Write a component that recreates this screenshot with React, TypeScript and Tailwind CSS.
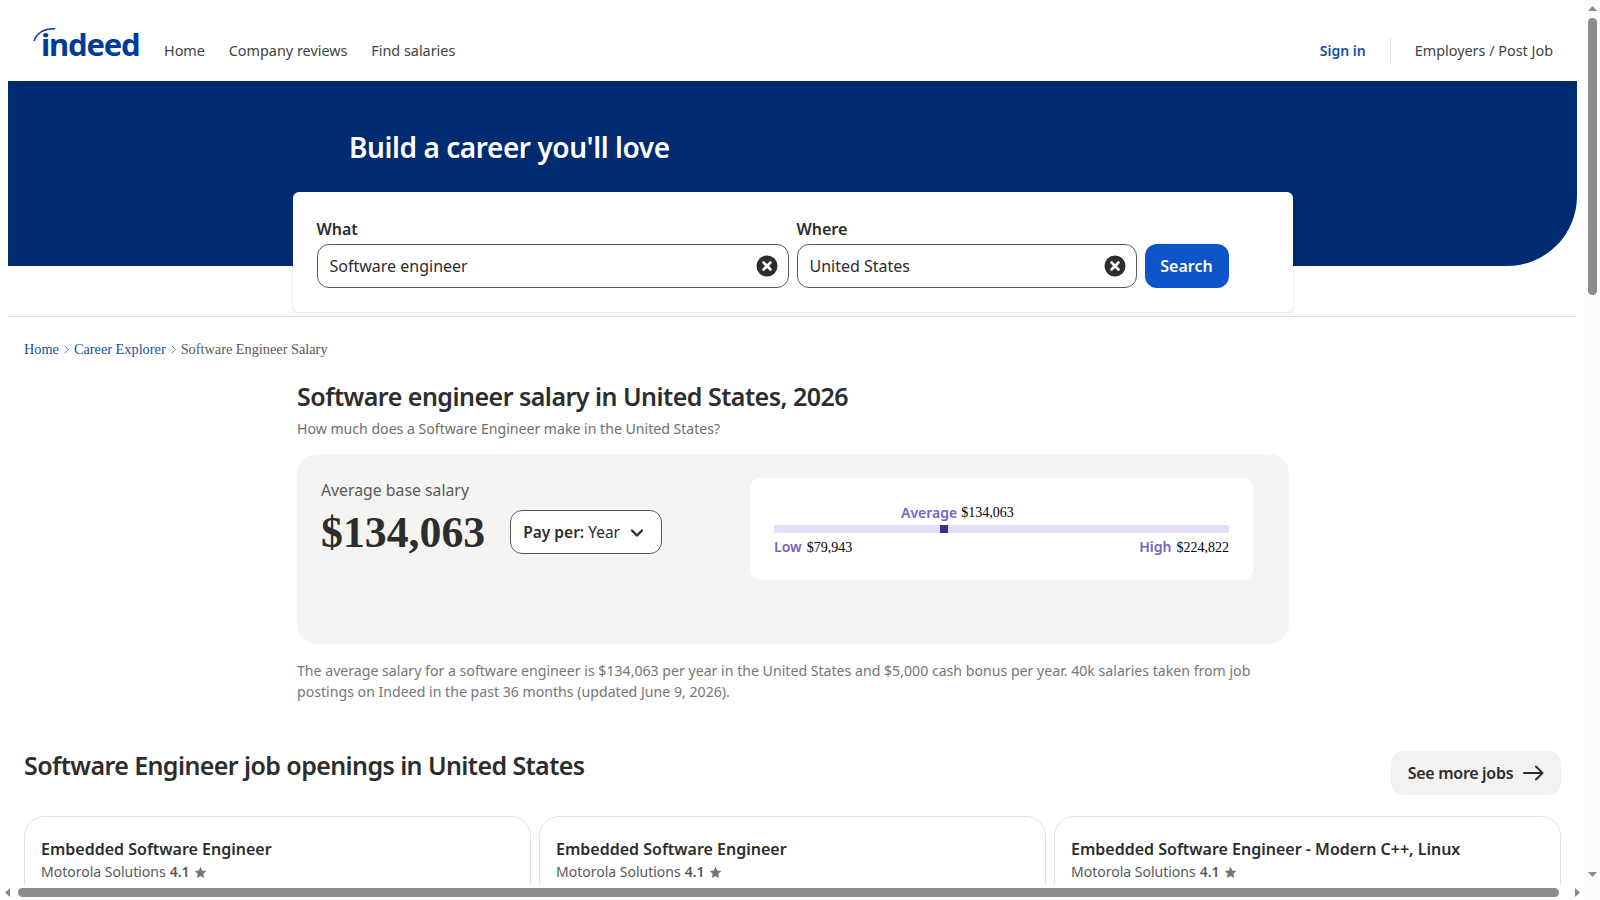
function ClearIcon() {
  return (
    <svg width="22" height="22" viewBox="0 0 22 22" className="shrink-0">
      <circle cx="11" cy="11" r="10.500" fill="#2d2d2d" />
      <path d="M7.500 7.500l7 7M14.500 7.500l-7 7" stroke="#fff" strokeWidth="2.600" strokeLinecap="round" />
    </svg>
  );
}

function Star() {
  return (
    <svg width="13" height="13" viewBox="0 0 24 24" fill="#767676" className="shrink-0">
      <path d="M12 1.500l3.200 6.900 7.500.9-5.500 5.200 1.400 7.500L12 18.300l-6.600 3.700 1.400-7.500L1.300 9.300l7.500-.9z" />
    </svg>
  );
}

function Logo() {
  return (
    <div className="relative h-[40px] w-[105px] shrink-0">
      <svg width="30" height="22" viewBox="0 0 30 22" className="absolute left-0 top-0">
        <path d="M1 14C4 6 11 1.500 22 1.800" fill="none" stroke="#003a9b" strokeWidth="1.400" />
      </svg>
      <span className="absolute left-[8px] top-[-4px] text-[31px] font-bold leading-[42px] tracking-[-1.200px] text-[#003a9b]">indeed</span>
    </div>
  );
}

function ChevronSep() {
  return (
    <svg width="5" height="9" viewBox="0 0 5 9" className="shrink-0">
      <path d="M.8.800l3.400 3.700L.8 8.200" fill="none" stroke="#767676" strokeWidth="1" />
    </svg>
  );
}

function JobCard({ title }: { title: string }) {
  return (
    <div className="h-[120px] rounded-[20px] border border-[#e4e2e0] px-4 pt-[21px]">
      <div className="text-[16px] font-semibold leading-[22px] text-[#2d2d2d]">{title}</div>
      <div className="mt-[1px] flex items-center gap-[4px] text-[14px] leading-[22px] text-[#595959]">
        <span>Motorola Solutions</span>
        <span className="font-semibold">4.1</span>
        <Star />
      </div>
    </div>
  );
}

function SearchField({ label, value, width }: { label: string; value: string; width: string }) {
  return (
    <div className={width}>
      <div className="mb-[1px] text-[16px] font-semibold leading-[27px] text-[#2d2d2d]">{label}</div>
      <div className="flex h-[44px] items-center justify-between rounded-xl border border-[#595959] pl-3 pr-[10px]">
        <span className="text-[16px] text-[#2d2d2d]">{value}</span>
        <ClearIcon />
      </div>
    </div>
  );
}

function Scrollbars() {
  return (
    <>
      <div className="absolute right-0 top-0 h-full w-[15px] bg-[#fbfbfb]">
        <svg width="15" height="15" viewBox="0 0 15 15" className="absolute left-0 top-0">
          <path d="M3 11l4.500-5 4.500 5z" fill="#8a8a8a" />
        </svg>
        <div className="absolute left-[3px] top-[18px] h-[277px] w-[9px] rounded-full bg-[#8c8c8c]" />
        <svg width="15" height="15" viewBox="0 0 15 15" className="absolute bottom-[18px] left-0">
          <path d="M3 5l4.500 5 4.500-5z" fill="#8a8a8a" />
        </svg>
      </div>
      <div className="absolute bottom-0 left-0 h-[15px] w-[1585px] bg-[#ffffff]">
        <svg width="15" height="15" viewBox="0 0 15 15" className="absolute left-0 top-0">
          <path d="M10 3L5 7.500l5 4.500z" fill="#8a8a8a" />
        </svg>
        <div className="absolute left-[18px] top-[3px] h-[9px] w-[1541px] rounded-full bg-[#8c8c8c]" />
        <svg width="15" height="15" viewBox="0 0 15 15" className="absolute right-0 top-0">
          <path d="M5 3l5 4.500-5 4.500z" fill="#8a8a8a" />
        </svg>
      </div>
    </>
  );
}

export default function App() {
  return (
    <div className="relative h-[900px] w-[1600px] overflow-hidden bg-white font-['Noto_Sans',sans-serif]">
      <div className="w-[1585px] px-2">
        {/* Header */}
        <header className="flex h-[81px] items-start justify-between pl-[25px] pr-[24px] text-[14.400px] text-[#424242]">
          <div className="flex items-start pt-[27px]">
            <Logo />
            <nav className="ml-[26px] flex gap-[23.800px] pt-[13px] leading-[22px]">
              <span>Home</span>
              <span>Company reviews</span>
              <span>Find salaries</span>
            </nav>
          </div>
          <div className="flex items-center pt-[38px]">
            <span className="text-[14px] font-semibold leading-[24px] text-[#164fa7]">Sign in</span>
            <div className="mx-6 h-[25px] w-px bg-[#e4e2e0]" />
            <span className="leading-[24px]">Employers / Post Job</span>
          </div>
        </header>

        {/* Hero */}
        <section className="h-[185px] rounded-br-[70px] bg-[#002b70]">
          <h2 className="pl-[341px] pt-[45px] text-[28px] font-semibold leading-[42px] tracking-[-0.430px] text-white">Build a career you'll love</h2>
        </section>

        {/* Search */}
        <div className="relative mx-auto -mt-[74px] flex h-[120px] w-[1000px] items-start gap-2 rounded-md bg-white px-6 pt-[24px] shadow-[0_1px_3px_rgba(0,0,0,0.14)]">
          <SearchField label="What" value="Software engineer" width="w-[472px]" />
          <SearchField label="Where" value="United States" width="w-[340px]" />
          <button className="mt-[28px] h-[44px] w-[84px] rounded-xl bg-[#0d55c8] text-[16px] font-semibold text-white">Search</button>
        </div>
        <div className="mt-[4px] h-px bg-[#e4e2e0]" />

        {/* Breadcrumb */}
        <nav className="mt-[22px] flex items-center gap-[5px] pl-4 font-['Liberation_Serif',serif] text-[14.300px] leading-[20px] text-[#595959]">
          <span className="text-[#164fa7]">Home</span>
          <ChevronSep />
          <span className="text-[#164fa7]">Career Explorer</span>
          <ChevronSep />
          <span>Software Engineer Salary</span>
        </nav>

        {/* Salary */}
        <main className="ml-[289px] w-[992px]">
          <h1 className="mt-[19px] text-[25px] font-semibold leading-[36px] tracking-[-0.520px] text-[#2d2d2d]">Software engineer salary in United States, 2026</h1>
          <p className="mt-[4px] text-[14.100px] leading-[22px] text-[#6f6f6f]">How much does a Software Engineer make in the United States?</p>
          <div className="mt-[14px] flex h-[190px] items-start rounded-[20px] bg-[#f5f4f2] pl-6 pt-[25px]">
            <div className="w-[429px] shrink-0">
              <div className="text-[15.800px] leading-[22px] text-[#595959]">Average base salary</div>
              <div className="mt-[9px] flex items-start">
                <span className="font-['Liberation_Serif',serif] text-[43.800px] font-bold leading-[44px] text-[#2d2d2d]">$134,063</span>
                <div className="ml-[25px] flex h-[44px] w-[152px] items-center rounded-xl border border-[#595959] bg-white pl-3 pt-[1px] text-[15.500px] text-[#2d2d2d]">
                  <span className="font-semibold">Pay per:</span>
                  <span className="ml-1">Year</span>
                  <svg width="14" height="10" viewBox="0 0 14 10" className="ml-[10px]">
                    <path d="M2 2.500l5 5 5-5" fill="none" stroke="#2d2d2d" strokeWidth="2.400" strokeLinecap="round" strokeLinejoin="round" />
                  </svg>
                </div>
              </div>
            </div>
            <div className="-mt-px flex h-[102px] w-[503px] flex-col rounded-[10px] bg-white px-6 pt-[25px]">
              <div className="flex items-center justify-start pl-[127px] text-[14px] leading-[20px]">
                <span className="font-semibold text-[#7563c6]">Average</span>
                <span className="ml-1 font-['Liberation_Serif',serif] text-black">$134,063</span>
              </div>
              <div className="relative mt-[2px] h-2 rounded-[1px] bg-[#e3dff8]">
                <div className="absolute left-[166px] top-0 h-2 w-2 bg-[#3e2c8f]" />
              </div>
              <div className="mt-[4px] flex justify-between text-[14px] leading-[20px]">
                <div>
                  <span className="font-semibold text-[#7563c6]">Low</span>
                  <span className="ml-[5px] font-['Liberation_Serif',serif] text-black">$79,943</span>
                </div>
                <div>
                  <span className="font-semibold text-[#7563c6]">High</span>
                  <span className="ml-[5px] font-['Liberation_Serif',serif] text-black">$224,822</span>
                </div>
              </div>
            </div>
          </div>
          <p className="mt-[16px] w-[960px] text-[14.130px] leading-[21px] text-[#767676]">
            The average salary for a software engineer is $134,063 per year in the United States and $5,000 cash bonus per year. 40k salaries taken from job postings on Indeed in the past 36 months (updated June 9, 2026).
          </p>
        </main>

        {/* Jobs */}
        <section className="px-4">
          <div className="mt-[48px] flex items-start justify-between">
            <h2 className="mt-[-3px] text-[25px] font-semibold leading-[36px] tracking-[-0.590px] text-[#2d2d2d]">Software Engineer job openings in United States</h2>
            <button className="mt-[1px] flex h-[44px] w-[170px] items-center justify-center gap-[10px] rounded-xl bg-[#f3f2f1] text-[16px] font-semibold tracking-[-0.300px] text-[#2d2d2d]">
              See more jobs
              <svg width="21" height="16" viewBox="0 0 21 16" fill="none" stroke="#2d2d2d" strokeWidth="2" strokeLinecap="round" strokeLinejoin="round">
                <path d="M1 8h18.500M13 1.500L19.500 8 13 14.500" />
              </svg>
            </button>
          </div>
          <div className="mt-[21px] grid grid-cols-3 gap-2">
            <JobCard title="Embedded Software Engineer" />
            <JobCard title="Embedded Software Engineer" />
            <JobCard title="Embedded Software Engineer - Modern C++, Linux" />
          </div>
        </section>
      </div>
      <Scrollbars />
    </div>
  );
}
